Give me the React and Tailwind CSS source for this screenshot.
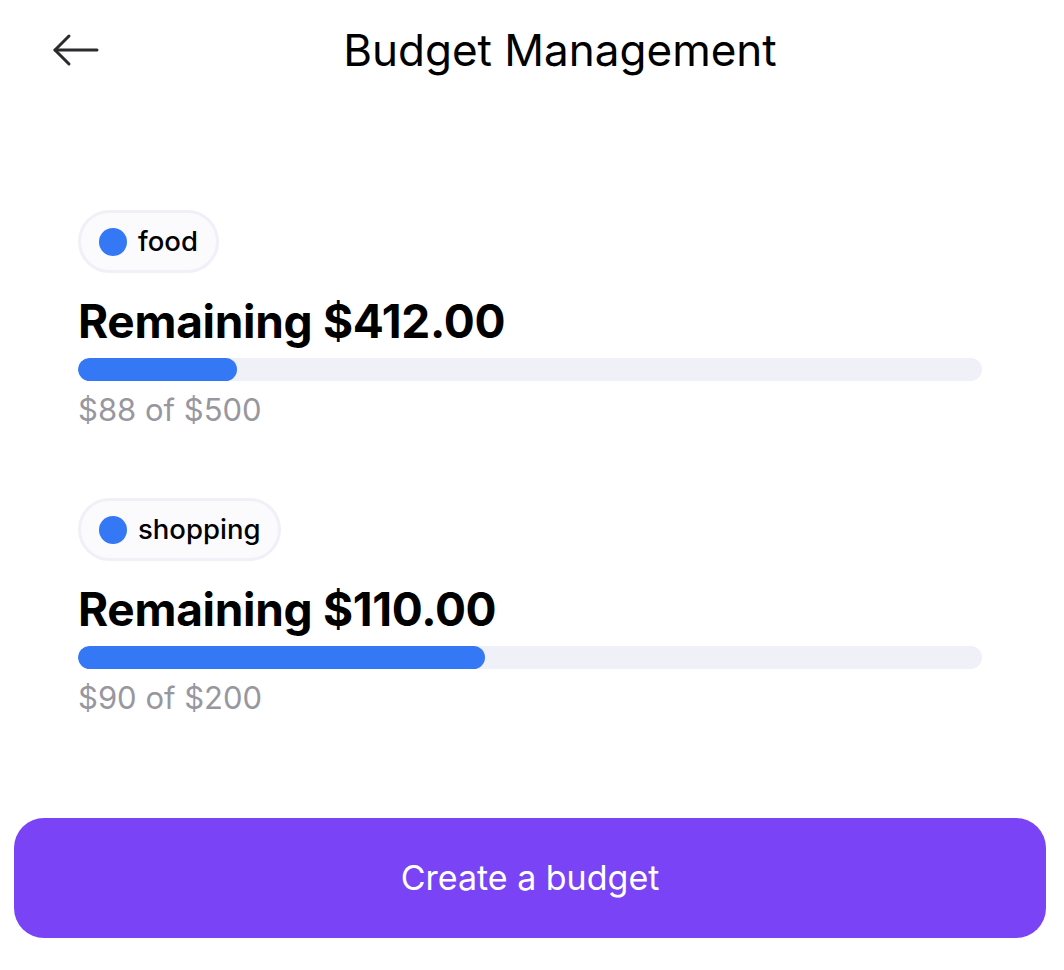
const budgets = [
  { name: 'food', spent: 88, limit: 500 },
  { name: 'shopping', spent: 90, limit: 200 },
];

const BackArrow = () => (
  <svg width="48" height="34" viewBox="0 0 48 34" fill="none" stroke="#2b2b2e" strokeWidth="3" strokeLinecap="round" strokeLinejoin="round">
    <path d="M3 17H45" />
    <path d="M17 3L3 17L17 31" />
  </svg>
);

const BudgetItem = ({ budget }) => {
  const remaining = (budget.limit - budget.spent).toFixed(2);
  const pct = (budget.spent / budget.limit) * 100;

  return (
    <div className="flex flex-col items-start">
      {/* Category chip */}
      <div className="flex items-center gap-[11px] h-[63px] pl-[18px] pr-[18px] rounded-full border-[3px] border-[#eff0f8] bg-[#fbfbfd]">
        <span className="w-[28px] h-[28px] rounded-full bg-[#3478f6]" />
        <span className="text-[27.5px] font-medium text-black leading-none">{budget.name}</span>
      </div>

      <h2 className="mt-[20px] text-[46px] font-bold text-black leading-[56px] tracking-[-0.3px]">
        Remaining ${remaining}
      </h2>

      <div className="mt-[9px] w-full h-[23px] rounded-full bg-[#f0f1f8] overflow-hidden">
        <div className="h-full rounded-full bg-[#3478f6]" style={{ width: `${pct}%` }} />
      </div>

      <p className="mt-[11px] text-[31px] text-[#98979f] leading-[36px]">
        ${budget.spent} of ${budget.limit}
      </p>
    </div>
  );
};

export default function App() {
  return (
    <div className="w-full min-h-[970px] bg-white flex flex-col font-['Inter','Noto_Sans',sans-serif]">
      {/* Header */}
      <div className="flex items-center h-[100px] pl-[52px] pr-[44px]">
        <BackArrow />
        <h1 className="flex-1 text-center text-[44px] text-black leading-none">Budget Management</h1>
      </div>

      {/* Budgets */}
      <div className="flex flex-col gap-[70px] mt-[110px] pl-[78px] pr-[82px]">
        {budgets.map((b) => (
          <BudgetItem key={b.name} budget={b} />
        ))}
      </div>

      {/* Create button */}
      <div className="mt-[102px] ml-[14px] mr-[18px]">
        <button className="w-full h-[120px] rounded-[30px] bg-[#7a44f6] text-white text-[34px] leading-none">
          Create a budget
        </button>
      </div>
    </div>
  );
}
